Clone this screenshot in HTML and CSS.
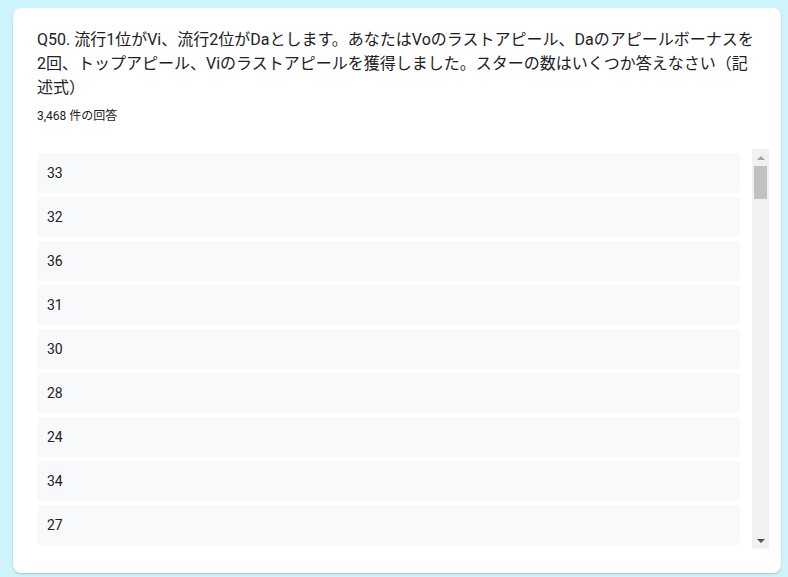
FILE: index.html
```html
<!DOCTYPE html>
<html lang="ja">
<head>
    <meta charset="UTF-8">
    <meta name="viewport" content="width=device-width, initial-scale=1.0">
    <title>回答</title>
    <link rel="stylesheet" href="styles.css">
</head>
<body>
    <div class="card">
        <div class="question">Q50. 流行1位がVi、流行2位がDaとします。あなたはVoのラストアピール、Daのアピールボーナスを2回、トップアピール、Viのラストアピールを獲得しました。スターの数はいくつか答えなさい（記述式）</div>
        <div class="count">3,468 件の回答</div>
        <div class="answers-box">
            <div class="answers" id="answers">
                <div class="answer">33</div>
                <div class="answer">32</div>
                <div class="answer">36</div>
                <div class="answer">31</div>
                <div class="answer">30</div>
                <div class="answer">28</div>
                <div class="answer">24</div>
                <div class="answer">34</div>
                <div class="answer">27</div>
            </div>
            <div class="scrollbar">
                <div class="sb-btn"><span class="arrow-up"></span></div>
                <div class="sb-thumb"></div>
                <div class="sb-space"></div>
                <div class="sb-btn"><span class="arrow-down"></span></div>
            </div>
        </div>
    </div>
</body>
</html>
```

FILE: styles.css
```css
body {
    margin: 0;
    padding: 8px 7px 4px 13px;
    background-color: #cdf3fb;
    font-family: Roboto, "Noto Sans CJK JP", sans-serif;
    color: #202124;
}

.card {
    background: #fff;
    border-radius: 8px;
    box-shadow: 0 1px 2px rgba(0,0,0,.2);
    padding: 20px 12px 24px 24px;
    height: 565px;
    box-sizing: border-box;
}

.question {
    font-size: 16px;
    line-height: 24px;
    padding-right: 8px;
}

.count {
    font-size: 12px;
    line-height: 16px;
    margin-top: 8px;
    margin-bottom: 25px;
}

.answers-box {
    display: flex;
    height: 400px;
}

.answers {
    flex: 1;
    overflow: hidden;
    padding-right: 12px;
}

.answer {
    background-color: #f8f9fa;
    border-radius: 4px;
    height: 40px;
    margin: 4px 0;
    padding-left: 10px;
    display: flex;
    align-items: center;
    font-size: 14px;
}

/* barra de desplazamiento dibujada a mano */
.scrollbar {
    width: 17px;
    background: #f1f1f1;
    display: flex;
    flex-direction: column;
}
.sb-btn {
    height: 17px;
    display: flex;
    align-items: center;
    justify-content: center;
}
.arrow-up {
    width: 0;
    height: 0;
    border-left: 4px solid transparent;
    border-right: 4px solid transparent;
    border-bottom: 4px solid #a3a3a3;
}
.arrow-down {
    width: 0;
    height: 0;
    border-left: 4px solid transparent;
    border-right: 4px solid transparent;
    border-top: 4px solid #505050;
}
.sb-thumb {
    height: 33px;
    margin: 0 2px;
    background: #c1c1c1;
}
.sb-space {
    flex: 1;
}
```
